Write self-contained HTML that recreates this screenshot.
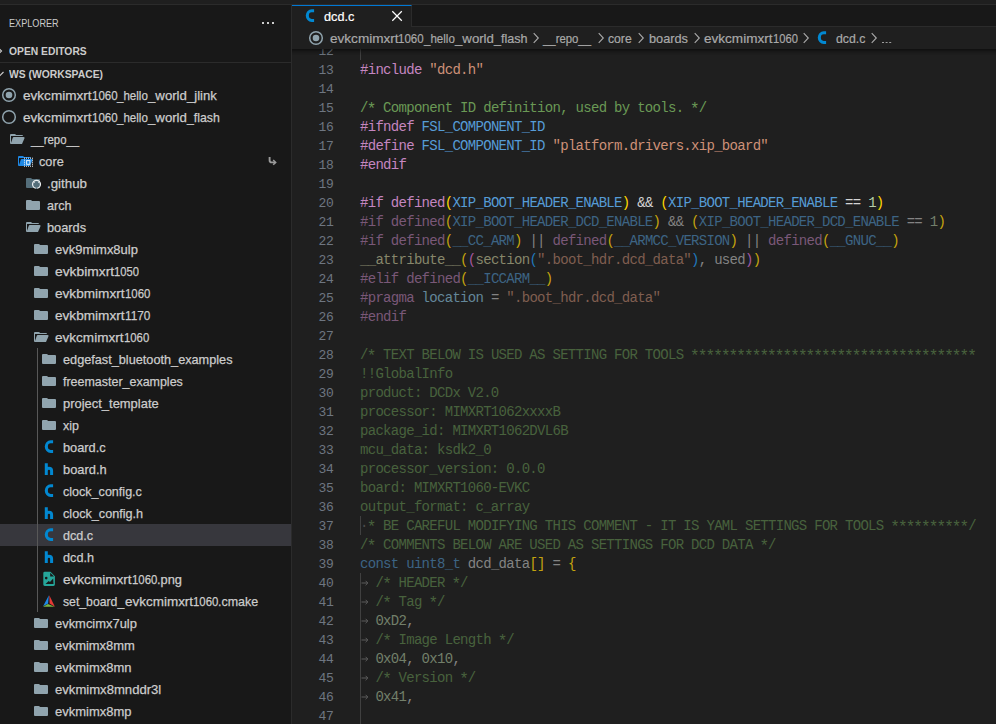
<!DOCTYPE html>
<html><head><meta charset="utf-8"><title>dcd.c</title>
<style>
html,body{margin:0;padding:0}
body{width:996px;height:724px;background:#1f1f1f;overflow:hidden;position:relative;font-family:"Liberation Sans",sans-serif;color:#cccccc}
.abs{position:absolute}
#top{left:0;top:0;width:996px;height:4px;background:#1f1f1f;border-bottom:1px solid #2b2b2b}
#sb{left:0;top:5px;width:291px;height:719px;background:#181818;border-right:1px solid #2b2b2b;overflow:hidden}
.row{position:absolute;left:0;width:291px;height:22px}
.row.sel{background:#37373d}
.ic{position:absolute;top:3px}
.lb{-webkit-text-stroke:0.25px #cccccc;position:absolute;top:1px;height:22px;line-height:22px;font-size:13px;white-space:pre;transform-origin:0 50%;color:#cccccc}
.hd{position:absolute;white-space:pre;transform-origin:0 50%;font-size:11px;color:#cccccc}
#tabs{left:292px;top:5px;width:704px;height:21px;background:#181818;border-bottom:1px solid #2b2b2b}
#tab{left:292px;top:5px;width:119px;height:22px;background:#1f1f1f;border-right:1px solid #2b2b2b;border-top:1px solid #0078d4;box-sizing:content-box;height:21px}
#bc{left:292px;top:27px;width:704px;height:22px;background:#1f1f1f}
.bt{-webkit-text-stroke:0.2px;position:absolute;top:27px;height:22px;line-height:22px;font-size:13px;white-space:pre;transform-origin:0 50%;color:#a9a9a9}
#ed{left:292px;top:49px;width:704px;height:675px;overflow:hidden;background:#1f1f1f}
#shadow{left:292px;top:49px;width:704px;height:6px;box-shadow:#000 0 6px 6px -6px inset}
.ln{position:absolute;left:0;width:704px;height:19px;line-height:19px;font-family:"Liberation Mono",monospace;font-size:14px;letter-spacing:-0.703px;white-space:pre}
.no{font-size:13px;letter-spacing:-0.103px;position:absolute;top:1px;left:0;width:41.800px;text-align:right;color:#6e7681}
.cd{position:absolute;top:1px;left:68px;color:#cccccc}
.dim .cd{color:#7e7e7e}
.dim .k{color:#7a5878}.dim .s{color:#7f5e50}.dim .c{color:#48623d}.dim .m{color:#3d6484}.dim .n{color:#727f6a}.dim .v{color:#64879a}.dim .o{color:#838383}.dim .f{color:#87876b}.dim .b1{color:#c4a30e}.dim .b2{color:#a4579f}.dim .b3{color:#1f78bb}.dim .w{color:#4b4b4b}
.k{color:#c586c0}.s{color:#ce9178}.c{color:#6a9955}.m{color:#569cd6}.b1{color:#ffd700}.b2{color:#da70d6}.b3{color:#179fff}.n{color:#b5cea8}.v{color:#9cdcfe}.o{color:#d4d4d4}.f{color:#dcdcaa}.w{color:#707070}
.as{font-size:16px;letter-spacing:-1.903px;line-height:0;position:relative;top:1.800px;left:-0.950px}
.ar{position:absolute;left:68.500px;top:5.500px}
.ig{position:absolute;left:68px;top:0;width:1px;height:19px;background:#404040}
</style></head><body>

<div id="top" class="abs"></div>
<div id="sb" class="abs">
<div class="hd" style="left:9px;top:9.5px;height:16px;line-height:16px;transform:scaleX(0.8294);">EXPLORER</div>
<div class="abs" style="left:262px;top:17px;width:2px;height:2px;background:#ccc;box-shadow:5px 0 #ccc,10px 0 #ccc"></div>
<div class="hd" style="font-weight:bold;left:9px;top:37.5px;height:16px;line-height:16px;transform:scaleX(0.9369);">OPEN EDITORS</div>
<div class="abs" style="left:0;top:57px;width:291px;height:1px;background:#2b2b2b"></div>
<div class="hd" style="font-weight:bold;left:9px;top:60.5px;height:16px;line-height:16px;transform:scaleX(0.9399);">WS (WORKSPACE)</div>
<svg class="abs" style="left:-9.1px;top:37.5px" width="16" height="16" viewBox="0 0 16 16"><path d="M6 3.500l4.500 4.500-4.500 4.500" fill="none" stroke="#ccc" stroke-width="1.200"/></svg>
<svg class="abs" style="left:-8.7px;top:61px" width="16" height="16" viewBox="0 0 16 16"><path d="M3.500 6l4.500 4.500 4.500-4.500" fill="none" stroke="#ccc" stroke-width="1.200"/></svg>
<div class="row" style="top:79px"><svg class="ic" style="left:1px" width="16" height="16" viewBox="0 0 16 16"><circle cx="8" cy="8" r="6.3" fill="none" stroke="#90a4ae" stroke-width="1.5"/><circle cx="8" cy="8" r="3.3" fill="#90a4ae"/></svg><span class="lb" style="left:23.2px;transform:scaleX(1.0438);">evkcmimxrt</span><span class="lb" style="left:91.8px;transform:scaleX(0.8851);">1060</span><span class="lb" style="left:117.4px;transform:scaleX(0.8875);">_hello</span><span class="lb" style="left:148.2px;transform:scaleX(1.0157);">_world</span><span class="lb" style="left:187.1px;transform:scaleX(1.0059);">_jlink</span></div>
<div class="row" style="top:101px"><svg class="ic" style="left:1px" width="16" height="16" viewBox="0 0 16 16"><circle cx="8" cy="8" r="6.3" fill="none" stroke="#90a4ae" stroke-width="1.5"/></svg><span class="lb" style="left:23.2px;transform:scaleX(1.0438);">evkcmimxrt</span><span class="lb" style="left:91.8px;transform:scaleX(0.8851);">1060</span><span class="lb" style="left:117.4px;transform:scaleX(0.8875);">_hello</span><span class="lb" style="left:148.2px;transform:scaleX(1.0157);">_world</span><span class="lb" style="left:187.1px;transform:scaleX(0.9452);">_flash</span></div>
<div class="row" style="top:123px"><svg class="ic" style="left:9px" width="16" height="16" viewBox="0 0 32 32"><path fill="#90a4ae" d="M28.967 12H9.442a2 2 0 0 0-1.898 1.368L4 24V10h24a2 2 0 0 0-2-2H15.124a2 2 0 0 1-1.28-.464l-1.288-1.072A2 2 0 0 0 11.276 6H4a2 2 0 0 0-2 2v16a2 2 0 0 0 2 2h22l4.805-11.212A2 2 0 0 0 28.967 12z"/></svg><span class="lb" style="left:31.0px;transform:scaleX(0.8771);">__repo__</span></div>
<div class="row" style="top:145px"><svg class="ic" style="left:17px" width="16" height="16" viewBox="0 0 32 32"><path fill="#1e88e5" d="M28.967 12H9.442a2 2 0 0 0-1.898 1.368L4 24V10h24a2 2 0 0 0-2-2H15.124a2 2 0 0 1-1.28-.464l-1.288-1.072A2 2 0 0 0 11.276 6H4a2 2 0 0 0-2 2v16a2 2 0 0 0 2 2h22l4.805-11.212A2 2 0 0 0 28.967 12z"/><rect x="14" y="9.4" width="2" height="2" fill="#eef5fc"/><rect x="14" y="13.4" width="2" height="2" fill="#eef5fc"/><rect x="14" y="17.4" width="2" height="2" fill="#eef5fc"/><rect x="14" y="21.4" width="2" height="2" fill="#eef5fc"/><rect x="14" y="25.4" width="2" height="2" fill="#eef5fc"/><rect x="18" y="9.4" width="2" height="2" fill="#eef5fc"/><rect x="18" y="25.4" width="2" height="2" fill="#eef5fc"/><rect x="22" y="9.4" width="2" height="2" fill="#eef5fc"/><rect x="22" y="25.4" width="2" height="2" fill="#eef5fc"/><rect x="26" y="9.4" width="2" height="2" fill="#eef5fc"/><rect x="26" y="25.4" width="2" height="2" fill="#eef5fc"/><rect x="30" y="9.4" width="2" height="2" fill="#eef5fc"/><rect x="30" y="13.4" width="2" height="2" fill="#eef5fc"/><rect x="30" y="17.4" width="2" height="2" fill="#eef5fc"/><rect x="30" y="21.4" width="2" height="2" fill="#eef5fc"/><rect x="30" y="25.4" width="2" height="2" fill="#eef5fc"/><rect x="18.200" y="14.200" width="8.600" height="9.400" fill="#e3f2fd"/><rect x="20.200" y="16.200" width="4.600" height="5.400" fill="#1e88e5"/></svg><span class="lb" style="left:39.2px;transform:scaleX(0.9764);">core</span></div>
<div class="row" style="top:167px"><svg class="ic" style="left:25px" width="16" height="16" viewBox="0 0 32 32"><path fill="#546e7a" d="M13.844 7.536l-1.288-1.072A2 2 0 0 0 11.276 6H4a2 2 0 0 0-2 2v16a2 2 0 0 0 2 2h24a2 2 0 0 0 2-2V10a2 2 0 0 0-2-2H15.124a2 2 0 0 1-1.28-.464z"/><circle cx="23" cy="18.600" r="7.900" fill="#546e7a" stroke="#eceff1" stroke-width="2.400"/><path fill="#eceff1" d="M17 12.500l3.200 1.500-2.500 2.500zM29 12.500l-3.200 1.500 2.500 2.500z"/><rect x="21.800" y="25" width="2.400" height="3" fill="#546e7a"/></svg><span class="lb" style="left:47.3px;transform:scaleX(1.0244);">.github</span></div>
<div class="row" style="top:189px"><svg class="ic" style="left:25px" width="16" height="16" viewBox="0 0 32 32"><path fill="#90a4ae" d="M13.844 7.536l-1.288-1.072A2 2 0 0 0 11.276 6H4a2 2 0 0 0-2 2v16a2 2 0 0 0 2 2h24a2 2 0 0 0 2-2V10a2 2 0 0 0-2-2H15.124a2 2 0 0 1-1.28-.464z"/></svg><span class="lb" style="left:46.9px;transform:scaleX(0.9685);">arch</span></div>
<div class="row" style="top:211px"><svg class="ic" style="left:25px" width="16" height="16" viewBox="0 0 32 32"><path fill="#90a4ae" d="M28.967 12H9.442a2 2 0 0 0-1.898 1.368L4 24V10h24a2 2 0 0 0-2-2H15.124a2 2 0 0 1-1.28-.464l-1.288-1.072A2 2 0 0 0 11.276 6H4a2 2 0 0 0-2 2v16a2 2 0 0 0 2 2h22l4.805-11.212A2 2 0 0 0 28.967 12z"/></svg><span class="lb" style="left:47.3px;transform:scaleX(0.9836);">boards</span></div>
<div class="row" style="top:233px"><svg class="ic" style="left:33px" width="16" height="16" viewBox="0 0 32 32"><path fill="#90a4ae" d="M13.844 7.536l-1.288-1.072A2 2 0 0 0 11.276 6H4a2 2 0 0 0-2 2v16a2 2 0 0 0 2 2h24a2 2 0 0 0 2-2V10a2 2 0 0 0-2-2H15.124a2 2 0 0 1-1.28-.464z"/></svg><span class="lb" style="left:55.1px;transform:scaleX(0.9977);">evk9mimx8ulp</span></div>
<div class="row" style="top:255px"><svg class="ic" style="left:33px" width="16" height="16" viewBox="0 0 32 32"><path fill="#90a4ae" d="M13.844 7.536l-1.288-1.072A2 2 0 0 0 11.276 6H4a2 2 0 0 0-2 2v16a2 2 0 0 0 2 2h24a2 2 0 0 0 2-2V10a2 2 0 0 0-2-2H15.124a2 2 0 0 1-1.28-.464z"/></svg><span class="lb" style="left:55.1px;transform:scaleX(1.0643);">evkbimxrt</span><span class="lb" style="left:114.3px;transform:scaleX(0.8609);">1050</span></div>
<div class="row" style="top:277px"><svg class="ic" style="left:33px" width="16" height="16" viewBox="0 0 32 32"><path fill="#90a4ae" d="M13.844 7.536l-1.288-1.072A2 2 0 0 0 11.276 6H4a2 2 0 0 0-2 2v16a2 2 0 0 0 2 2h24a2 2 0 0 0 2-2V10a2 2 0 0 0-2-2H15.124a2 2 0 0 1-1.28-.464z"/></svg><span class="lb" style="left:55.1px;transform:scaleX(1.0458);">evkbmimxrt</span><span class="lb" style="left:124.6px;transform:scaleX(0.8782);">1060</span></div>
<div class="row" style="top:299px"><svg class="ic" style="left:33px" width="16" height="16" viewBox="0 0 32 32"><path fill="#90a4ae" d="M13.844 7.536l-1.288-1.072A2 2 0 0 0 11.276 6H4a2 2 0 0 0-2 2v16a2 2 0 0 0 2 2h24a2 2 0 0 0 2-2V10a2 2 0 0 0-2-2H15.124a2 2 0 0 1-1.28-.464z"/></svg><span class="lb" style="left:55.1px;transform:scaleX(1.0458);">evkbmimxrt</span><span class="lb" style="left:124.6px;transform:scaleX(0.9082);">1170</span></div>
<div class="row" style="top:321px"><svg class="ic" style="left:33px" width="16" height="16" viewBox="0 0 32 32"><path fill="#90a4ae" d="M28.967 12H9.442a2 2 0 0 0-1.898 1.368L4 24V10h24a2 2 0 0 0-2-2H15.124a2 2 0 0 1-1.28-.464l-1.288-1.072A2 2 0 0 0 11.276 6H4a2 2 0 0 0-2 2v16a2 2 0 0 0 2 2h22l4.805-11.212A2 2 0 0 0 28.967 12z"/></svg><span class="lb" style="left:55.1px;transform:scaleX(1.0423);">evkcmimxrt</span><span class="lb" style="left:123.6px;transform:scaleX(0.8713);">1060</span></div>
<div class="row" style="top:343px"><svg class="ic" style="left:41px" width="16" height="16" viewBox="0 0 32 32"><path fill="#90a4ae" d="M13.844 7.536l-1.288-1.072A2 2 0 0 0 11.276 6H4a2 2 0 0 0-2 2v16a2 2 0 0 0 2 2h24a2 2 0 0 0 2-2V10a2 2 0 0 0-2-2H15.124a2 2 0 0 1-1.28-.464z"/></svg><span class="lb" style="left:63.3px;transform:scaleX(0.9771);">edgefast_bluetooth_examples</span></div>
<div class="row" style="top:365px"><svg class="ic" style="left:41px" width="16" height="16" viewBox="0 0 32 32"><path fill="#90a4ae" d="M13.844 7.536l-1.288-1.072A2 2 0 0 0 11.276 6H4a2 2 0 0 0-2 2v16a2 2 0 0 0 2 2h24a2 2 0 0 0 2-2V10a2 2 0 0 0-2-2H15.124a2 2 0 0 1-1.28-.464z"/></svg><span class="lb" style="left:63.3px;transform:scaleX(0.9584);">freemaster_examples</span></div>
<div class="row" style="top:387px"><svg class="ic" style="left:41px" width="16" height="16" viewBox="0 0 32 32"><path fill="#90a4ae" d="M13.844 7.536l-1.288-1.072A2 2 0 0 0 11.276 6H4a2 2 0 0 0-2 2v16a2 2 0 0 0 2 2h24a2 2 0 0 0 2-2V10a2 2 0 0 0-2-2H15.124a2 2 0 0 1-1.28-.464z"/></svg><span class="lb" style="left:63.3px;transform:scaleX(0.9956);">project_template</span></div>
<div class="row" style="top:409px"><svg class="ic" style="left:41px" width="16" height="16" viewBox="0 0 32 32"><path fill="#90a4ae" d="M13.844 7.536l-1.288-1.072A2 2 0 0 0 11.276 6H4a2 2 0 0 0-2 2v16a2 2 0 0 0 2 2h24a2 2 0 0 0 2-2V10a2 2 0 0 0-2-2H15.124a2 2 0 0 1-1.28-.464z"/></svg><span class="lb" style="left:63.3px;transform:scaleX(0.9564);">xip</span></div>
<div class="row" style="top:431px"><svg class="ic" style="left:41px" width="16" height="16" viewBox="0 0 16 16"><path fill="none" stroke="#0288d1" stroke-width="3.1" d="M12.1 2.75H9.7A4.4 4.85 0 0 0 9.7 12.45H12.1"/></svg><span class="lb" style="left:63.3px;transform:scaleX(0.9844);">board.c</span></div>
<div class="row" style="top:453px"><svg class="ic" style="left:41px" width="16" height="16" viewBox="0 0 16 16"><path fill="none" stroke="#0288d1" stroke-width="3" d="M5.3 2.3V13.9M5.3 9.8C5.3 6.3 10.6 6.3 10.6 9.8V13.9"/></svg><span class="lb" style="left:63.3px;transform:scaleX(0.9911);">board.h</span></div>
<div class="row" style="top:475px"><svg class="ic" style="left:41px" width="16" height="16" viewBox="0 0 16 16"><path fill="none" stroke="#0288d1" stroke-width="3.1" d="M12.1 2.75H9.7A4.4 4.85 0 0 0 9.7 12.45H12.1"/></svg><span class="lb" style="left:63.3px;transform:scaleX(0.9662);">clock_config.c</span></div>
<div class="row" style="top:497px"><svg class="ic" style="left:41px" width="16" height="16" viewBox="0 0 16 16"><path fill="none" stroke="#0288d1" stroke-width="3" d="M5.3 2.3V13.9M5.3 9.8C5.3 6.3 10.6 6.3 10.6 9.8V13.9"/></svg><span class="lb" style="left:63.3px;transform:scaleX(0.9722);">clock_config.h</span></div>
<div class="row sel" style="top:519px"><svg class="ic" style="left:41px" width="16" height="16" viewBox="0 0 16 16"><path fill="none" stroke="#0288d1" stroke-width="3.1" d="M12.1 2.75H9.7A4.4 4.85 0 0 0 9.7 12.45H12.1"/></svg><span class="lb" style="left:63.3px;transform:scaleX(0.9685);">dcd.c</span></div>
<div class="row" style="top:541px"><svg class="ic" style="left:41px" width="16" height="16" viewBox="0 0 16 16"><path fill="none" stroke="#0288d1" stroke-width="3" d="M5.3 2.3V13.9M5.3 9.8C5.3 6.3 10.6 6.3 10.6 9.8V13.9"/></svg><span class="lb" style="left:63.3px;transform:scaleX(0.9745);">dcd.h</span></div>
<div class="row" style="top:563px"><svg class="ic" style="left:41px" width="16" height="16" viewBox="0 0 16 16"><path fill="#26a69a" d="M3.700 .8h5.800L13.900 5.200v8.400a1.400 1.400 0 0 1-1.400 1.400H3.700a1.400 1.400 0 0 1-1.400-1.400V2.200A1.400 1.400 0 0 1 3.700 .8z"/><path fill="#181818" d="M4.500 12.900L7.700 9.900 9 10.900 12.200 7.400l.3 5.500z"/><circle cx="5.200" cy="7.100" r="1.300" fill="#181818"/><path fill="#181818" d="M9.200 1.800v3.800h3.800z"/></svg><span class="lb" style="left:63.3px;transform:scaleX(1.0438);">evkcmimxrt</span><span class="lb" style="left:131.9px;transform:scaleX(0.8748);">1060</span><span class="lb" style="left:157.2px;transform:scaleX(0.9877);">.png</span></div>
<div class="row" style="top:585px"><svg class="ic" style="left:41px" width="16" height="16" viewBox="0 0 16 16"><path fill="#1e88e5" d="M7.900 2.200L2.100 13.200l5-2.600z"/><path fill="#e53935" d="M8.300 2.200l5.600 11.500-5.300-3.300z"/><path fill="#7cb342" d="M2.100 13.800l4.800-2.800 6.700 2.800z"/></svg><span class="lb" style="left:63.3px;transform:scaleX(0.9406);">set_board_</span><span class="lb" style="left:124.5px;transform:scaleX(1.0362);">evkcmimxrt</span><span class="lb" style="left:192.6px;transform:scaleX(0.8748);">1060</span><span class="lb" style="left:217.9px;transform:scaleX(0.9593);">.cmake</span></div>
<div class="row" style="top:607px"><svg class="ic" style="left:33px" width="16" height="16" viewBox="0 0 32 32"><path fill="#90a4ae" d="M13.844 7.536l-1.288-1.072A2 2 0 0 0 11.276 6H4a2 2 0 0 0-2 2v16a2 2 0 0 0 2 2h24a2 2 0 0 0 2-2V10a2 2 0 0 0-2-2H15.124a2 2 0 0 1-1.28-.464z"/></svg><span class="lb" style="left:55.1px;transform:scaleX(0.9944);">evkmcimx7ulp</span></div>
<div class="row" style="top:629px"><svg class="ic" style="left:33px" width="16" height="16" viewBox="0 0 32 32"><path fill="#90a4ae" d="M13.844 7.536l-1.288-1.072A2 2 0 0 0 11.276 6H4a2 2 0 0 0-2 2v16a2 2 0 0 0 2 2h24a2 2 0 0 0 2-2V10a2 2 0 0 0-2-2H15.124a2 2 0 0 1-1.28-.464z"/></svg><span class="lb" style="left:55.1px;transform:scaleX(0.9966);">evkmimx8mm</span></div>
<div class="row" style="top:651px"><svg class="ic" style="left:33px" width="16" height="16" viewBox="0 0 32 32"><path fill="#90a4ae" d="M13.844 7.536l-1.288-1.072A2 2 0 0 0 11.276 6H4a2 2 0 0 0-2 2v16a2 2 0 0 0 2 2h24a2 2 0 0 0 2-2V10a2 2 0 0 0-2-2H15.124a2 2 0 0 1-1.28-.464z"/></svg><span class="lb" style="left:55.1px;transform:scaleX(0.9990);">evkmimx8mn</span></div>
<div class="row" style="top:673px"><svg class="ic" style="left:33px" width="16" height="16" viewBox="0 0 32 32"><path fill="#90a4ae" d="M13.844 7.536l-1.288-1.072A2 2 0 0 0 11.276 6H4a2 2 0 0 0-2 2v16a2 2 0 0 0 2 2h24a2 2 0 0 0 2-2V10a2 2 0 0 0-2-2H15.124a2 2 0 0 1-1.28-.464z"/></svg><span class="lb" style="left:55.1px;transform:scaleX(1.0077);">evkmimx8mnddr3l</span></div>
<div class="row" style="top:695px"><svg class="ic" style="left:33px" width="16" height="16" viewBox="0 0 32 32"><path fill="#90a4ae" d="M13.844 7.536l-1.288-1.072A2 2 0 0 0 11.276 6H4a2 2 0 0 0-2 2v16a2 2 0 0 0 2 2h24a2 2 0 0 0 2-2V10a2 2 0 0 0-2-2H15.124a2 2 0 0 1-1.28-.464z"/></svg><span class="lb" style="left:55.1px;transform:scaleX(0.9990);">evkmimx8mp</span></div>
<div class="abs" style="left:37px;top:343px;width:1px;height:264px;background:#585858"></div>
<svg class="abs" style="left:266px;top:150px" width="12" height="12" viewBox="0 0 12 12"><path d="M3.600 1.900v3.300q0 2.200 2.200 2.200h3.200" fill="none" stroke="#9a9a9a" stroke-width="1.900"/><path d="M7.200 5l2.500 2.400-2.500 2.400" fill="none" stroke="#9a9a9a" stroke-width="1.500"/></svg>
</div>
<div id="tabs" class="abs"></div><div id="tab" class="abs"></div>
<div id="bc" class="abs"></div>
<span class="bt" style="left:324.0px;transform:scaleX(0.9750);top:6px;color:#ffffff">dcd.c</span>
<span class="bt" style="left:329.7px;transform:scaleX(1.0438);top:28px;color:#a9a9a9">evkcmimxrt</span><span class="bt" style="left:398.3px;transform:scaleX(0.8851);top:28px;color:#a9a9a9">1060</span><span class="bt" style="left:423.9px;transform:scaleX(0.8875);top:28px;color:#a9a9a9">_hello</span><span class="bt" style="left:454.7px;transform:scaleX(1.0157);top:28px;color:#a9a9a9">_world</span><span class="bt" style="left:493.6px;transform:scaleX(0.9682);top:28px;color:#a9a9a9">_flash</span>
<span class="bt" style="left:543.0px;transform:scaleX(0.8735);top:28px;color:#a9a9a9">__repo__</span>
<span class="bt" style="left:608.0px;transform:scaleX(0.9369);top:28px;color:#a9a9a9">core</span>
<span class="bt" style="left:648.5px;transform:scaleX(0.9811);top:28px;color:#a9a9a9">boards</span>
<span class="bt" style="left:704.2px;transform:scaleX(1.0423);top:28px;color:#a9a9a9">evkcmimxrt</span><span class="bt" style="left:772.7px;transform:scaleX(0.8609);top:28px;color:#a9a9a9">1060</span>
<span class="bt" style="left:836.2px;transform:scaleX(0.9460);top:28px;color:#a9a9a9">dcd.c</span>
<svg class="abs" style="left:302px;top:8px" width="16" height="16" viewBox="0 0 16 16"><path fill="none" stroke="#0288d1" stroke-width="3.1" d="M12.1 2.75H9.7A4.4 4.85 0 0 0 9.7 12.45H12.1"/></svg>
<svg class="abs" style="left:389px;top:8px" width="16" height="16" viewBox="0 0 16 16"><path d="M3.300 3.300l9.500 9.500M12.800 3.300L3.300 12.800" fill="none" stroke="#fff" stroke-width="1.250"/></svg>
<svg class="abs" style="left:308px;top:30px" width="16" height="16" viewBox="0 0 16 16"><circle cx="8" cy="8" r="6.3" fill="none" stroke="#90a4ae" stroke-width="1.5"/><circle cx="8" cy="8" r="3.3" fill="#90a4ae"/></svg>
<svg class="abs" style="left:528.2px;top:30px" width="16" height="16" viewBox="0 0 16 16"><path d="M5.700 3.200l4.600 4.800-4.600 4.800" fill="none" stroke="#a9a9a9" stroke-width="1.100"/></svg>
<svg class="abs" style="left:592.8px;top:30px" width="16" height="16" viewBox="0 0 16 16"><path d="M5.700 3.200l4.600 4.800-4.600 4.800" fill="none" stroke="#a9a9a9" stroke-width="1.100"/></svg>
<svg class="abs" style="left:633.4px;top:30px" width="16" height="16" viewBox="0 0 16 16"><path d="M5.700 3.200l4.600 4.800-4.600 4.800" fill="none" stroke="#a9a9a9" stroke-width="1.100"/></svg>
<svg class="abs" style="left:688.7px;top:30px" width="16" height="16" viewBox="0 0 16 16"><path d="M5.700 3.200l4.600 4.800-4.600 4.800" fill="none" stroke="#a9a9a9" stroke-width="1.100"/></svg>
<svg class="abs" style="left:798.4px;top:30px" width="16" height="16" viewBox="0 0 16 16"><path d="M5.700 3.200l4.600 4.800-4.600 4.800" fill="none" stroke="#a9a9a9" stroke-width="1.100"/></svg>
<svg class="abs" style="left:865.7px;top:30px" width="16" height="16" viewBox="0 0 16 16"><path d="M5.700 3.200l4.600 4.800-4.600 4.800" fill="none" stroke="#a9a9a9" stroke-width="1.100"/></svg>
<svg class="abs" style="left:814px;top:30px" width="16" height="16" viewBox="0 0 16 16"><path fill="none" stroke="#0288d1" stroke-width="3.1" d="M12.1 2.75H9.7A4.4 4.85 0 0 0 9.7 12.45H12.1"/></svg>
<div class="abs" style="left:882.400px;top:41.800px;width:1.400px;height:1.400px;background:#9c9c9c;box-shadow:3.600px 0 #9c9c9c,7.200px 0 #9c9c9c"></div>
<div id="ed" class="abs">
<div class="ln" style="top:-8px"><span class="no">12</span><span class="ig"></span><span class="cd"></span></div>
<div class="ln" style="top:11px"><span class="no">13</span><span class="cd"><span class="k">#include</span> <span class="s">&quot;dcd.h&quot;</span></span></div>
<div class="ln" style="top:30px"><span class="no">14</span><span class="cd"></span></div>
<div class="ln" style="top:49px"><span class="no">15</span><span class="cd"><span class="c">/<span class="as">*</span> Component ID definition, used by tools. <span class="as">*</span>/</span></span></div>
<div class="ln" style="top:68px"><span class="no">16</span><span class="cd"><span class="k">#ifndef</span> <span class="m">FSL_COMPONENT_ID</span></span></div>
<div class="ln" style="top:87px"><span class="no">17</span><span class="cd"><span class="k">#define</span> <span class="m">FSL_COMPONENT_ID</span> <span class="s">&quot;platform.drivers.xip_board&quot;</span></span></div>
<div class="ln" style="top:106px"><span class="no">18</span><span class="cd"><span class="k">#endif</span></span></div>
<div class="ln" style="top:125px"><span class="no">19</span><span class="cd"></span></div>
<div class="ln" style="top:144px"><span class="no">20</span><span class="cd"><span class="k">#if</span> <span class="k">defined</span><span class="b1">(</span><span class="m">XIP_BOOT_HEADER_ENABLE</span><span class="b1">)</span><span class="o"> &amp;&amp; </span><span class="b1">(</span><span class="m">XIP_BOOT_HEADER_ENABLE</span><span class="o"> == </span><span class="n">1</span><span class="b1">)</span></span></div>
<div class="ln dim" style="top:163px"><span class="no">21</span><span class="cd"><span class="k">#if</span> <span class="k">defined</span><span class="b1">(</span><span class="m">XIP_BOOT_HEADER_DCD_ENABLE</span><span class="b1">)</span><span class="o"> &amp;&amp; </span><span class="b1">(</span><span class="m">XIP_BOOT_HEADER_DCD_ENABLE</span><span class="o"> == </span><span class="n">1</span><span class="b1">)</span></span></div>
<div class="ln dim" style="top:182px"><span class="no">22</span><span class="cd"><span class="k">#if</span> <span class="k">defined</span><span class="b1">(</span><span class="m">__CC_ARM</span><span class="b1">)</span><span class="o"> || </span><span class="k">defined</span><span class="b1">(</span><span class="m">__ARMCC_VERSION</span><span class="b1">)</span><span class="o"> || </span><span class="k">defined</span><span class="b1">(</span><span class="m">__GNUC__</span><span class="b1">)</span></span></div>
<div class="ln dim" style="top:201px"><span class="no">23</span><span class="cd"><span class="f">__attribute__</span><span class="b1">(</span><span class="b2">(</span><span class="f">section</span><span class="b3">(</span><span class="s">&quot;.boot_hdr.dcd_data&quot;</span><span class="b3">)</span><span class="o">, used</span><span class="b2">)</span><span class="b1">)</span></span></div>
<div class="ln dim" style="top:220px"><span class="no">24</span><span class="cd"><span class="k">#elif</span> <span class="k">defined</span><span class="b1">(</span><span class="m">__ICCARM__</span><span class="b1">)</span></span></div>
<div class="ln dim" style="top:239px"><span class="no">25</span><span class="cd"><span class="k">#pragma</span> <span class="v">location</span><span class="o"> = </span><span class="s">&quot;.boot_hdr.dcd_data&quot;</span></span></div>
<div class="ln dim" style="top:258px"><span class="no">26</span><span class="cd"><span class="k">#endif</span></span></div>
<div class="ln dim" style="top:277px"><span class="no">27</span><span class="cd"></span></div>
<div class="ln dim" style="top:296px"><span class="no">28</span><span class="cd"><span class="c">/<span class="as">*</span> TEXT BELOW IS USED AS SETTING FOR TOOLS <span class="as">*************************************</span></span></span></div>
<div class="ln dim" style="top:315px"><span class="no">29</span><span class="cd"><span class="c">!!GlobalInfo</span></span></div>
<div class="ln dim" style="top:334px"><span class="no">30</span><span class="cd"><span class="c">product: DCDx V2.0</span></span></div>
<div class="ln dim" style="top:353px"><span class="no">31</span><span class="cd"><span class="c">processor: MIMXRT1062xxxxB</span></span></div>
<div class="ln dim" style="top:372px"><span class="no">32</span><span class="cd"><span class="c">package_id: MIMXRT1062DVL6B</span></span></div>
<div class="ln dim" style="top:391px"><span class="no">33</span><span class="cd"><span class="c">mcu_data</span><span class="c">: ksdk2_0</span></span></div>
<div class="ln dim" style="top:410px"><span class="no">34</span><span class="cd"><span class="c">processor_version: 0.0.0</span></span></div>
<div class="ln dim" style="top:429px"><span class="no">35</span><span class="cd"><span class="c">board: MIMXRT1060-EVKC</span></span></div>
<div class="ln dim" style="top:448px"><span class="no">36</span><span class="cd"><span class="c">output_format: c_array</span></span></div>
<div class="ln dim" style="top:467px"><span class="no">37</span><span class="ig"></span><span class="cd"><span class="w">·</span><span class="c"><span class="as">*</span> BE CAREFUL MODIFYING THIS COMMENT - IT IS YAML SETTINGS FOR TOOLS <span class="as">**********</span>/</span></span></div>
<div class="ln dim" style="top:486px"><span class="no">38</span><span class="cd"><span class="c">/<span class="as">*</span> COMMENTS BELOW ARE USED AS SETTINGS FOR DCD DATA <span class="as">*</span>/</span></span></div>
<div class="ln dim" style="top:505px"><span class="no">39</span><span class="cd"><span class="m">const</span> <span class="m">uint8_t</span> <span class="o">dcd_data</span><span class="b1">[]</span><span class="o"> = </span><span class="b1">{</span></span></div>
<div class="ln dim" style="top:524px"><span class="no">40</span><span class="ig"></span><svg class="ar" width="8" height="8" viewBox="0 0 8 8"><path d="M0.500 4H6.800M4.600 1.800L6.800 4 4.600 6.200" fill="none" stroke="#5c5c5c" stroke-width="1"/></svg><span class="cd">  <span class="c">/<span class="as">*</span> HEADER <span class="as">*</span>/</span></span></div>
<div class="ln dim" style="top:543px"><span class="no">41</span><span class="ig"></span><svg class="ar" width="8" height="8" viewBox="0 0 8 8"><path d="M0.500 4H6.800M4.600 1.800L6.800 4 4.600 6.200" fill="none" stroke="#5c5c5c" stroke-width="1"/></svg><span class="cd">  <span class="c">/<span class="as">*</span> Tag <span class="as">*</span>/</span></span></div>
<div class="ln dim" style="top:562px"><span class="no">42</span><span class="ig"></span><svg class="ar" width="8" height="8" viewBox="0 0 8 8"><path d="M0.500 4H6.800M4.600 1.800L6.800 4 4.600 6.200" fill="none" stroke="#5c5c5c" stroke-width="1"/></svg><span class="cd">  <span class="n">0xD2</span><span class="o">,</span></span></div>
<div class="ln dim" style="top:581px"><span class="no">43</span><span class="ig"></span><svg class="ar" width="8" height="8" viewBox="0 0 8 8"><path d="M0.500 4H6.800M4.600 1.800L6.800 4 4.600 6.200" fill="none" stroke="#5c5c5c" stroke-width="1"/></svg><span class="cd">  <span class="c">/<span class="as">*</span> Image Length <span class="as">*</span>/</span></span></div>
<div class="ln dim" style="top:600px"><span class="no">44</span><span class="ig"></span><svg class="ar" width="8" height="8" viewBox="0 0 8 8"><path d="M0.500 4H6.800M4.600 1.800L6.800 4 4.600 6.200" fill="none" stroke="#5c5c5c" stroke-width="1"/></svg><span class="cd">  <span class="n">0x04</span><span class="o">, </span><span class="n">0x10</span><span class="o">,</span></span></div>
<div class="ln dim" style="top:619px"><span class="no">45</span><span class="ig"></span><svg class="ar" width="8" height="8" viewBox="0 0 8 8"><path d="M0.500 4H6.800M4.600 1.800L6.800 4 4.600 6.200" fill="none" stroke="#5c5c5c" stroke-width="1"/></svg><span class="cd">  <span class="c">/<span class="as">*</span> Version <span class="as">*</span>/</span></span></div>
<div class="ln dim" style="top:638px"><span class="no">46</span><span class="ig"></span><svg class="ar" width="8" height="8" viewBox="0 0 8 8"><path d="M0.500 4H6.800M4.600 1.800L6.800 4 4.600 6.200" fill="none" stroke="#5c5c5c" stroke-width="1"/></svg><span class="cd">  <span class="n">0x41</span><span class="o">,</span></span></div>
<div class="ln" style="top:657px"><span class="no">47</span><span class="ig"></span><span class="cd"></span></div>
</div>
<div id="shadow" class="abs"></div>
</body></html>
